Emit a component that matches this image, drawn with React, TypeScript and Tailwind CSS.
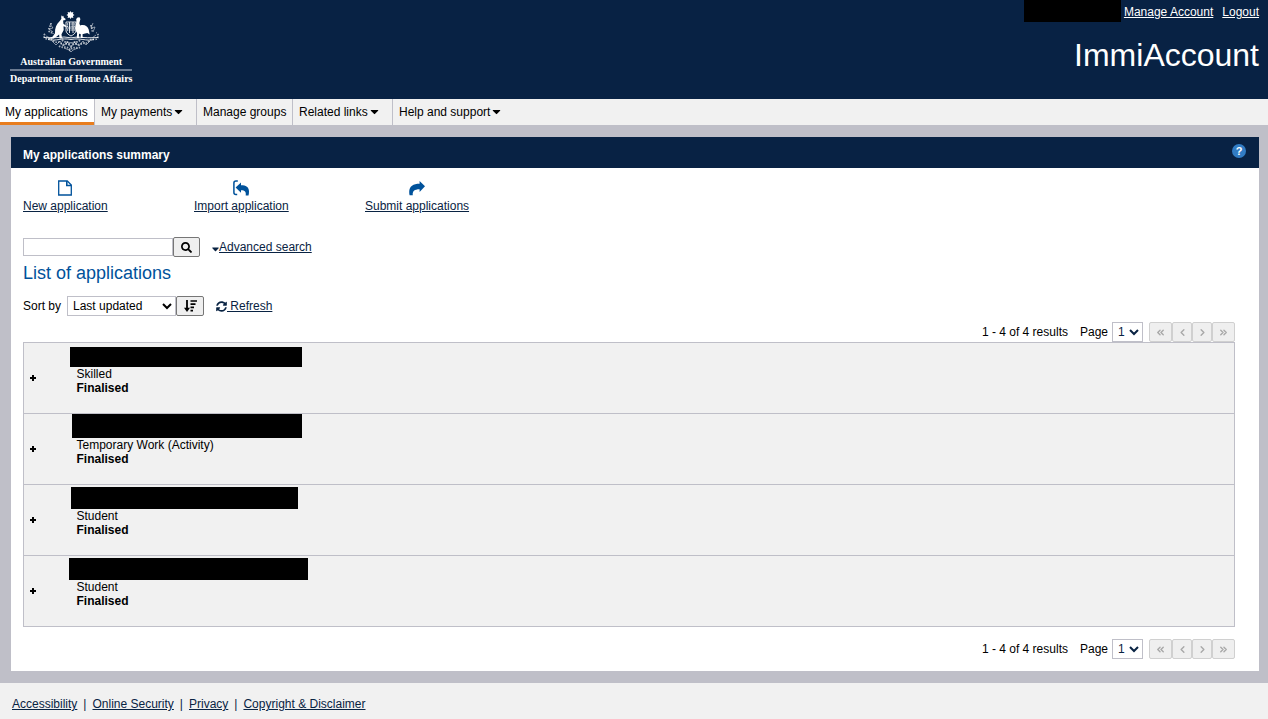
import React from "react";
import { FaCaretDown, FaSearch, FaSyncAlt } from "react-icons/fa";
import { ChevronLeft, ChevronRight, ChevronsLeft, ChevronsRight } from "lucide-react";

const applications = [
  { type: "Skilled", status: "Finalised", mask: "left-[-7px] top-[-6px] h-5 w-[232px]" },
  { type: "Temporary Work (Activity)", status: "Finalised", mask: "left-[-5px] top-[-10px] h-6 w-[230px]" },
  { type: "Student", status: "Finalised", mask: "left-[-6px] top-[-8px] h-[22px] w-[227px]" },
  { type: "Student", status: "Finalised", mask: "left-[-8px] top-[-8px] h-[22px] w-[239px]" },
];

const tabs = [
  { label: "My payments", menu: true, width: "w-[102px]" },
  { label: "Manage groups", menu: false, width: "w-[96px]" },
  { label: "Related links", menu: true, width: "w-[100px]" },
  { label: "Help and support", menu: true, width: "w-[120px]" },
];

function Crest() {
  return (
    <svg className="h-[42px] w-[58px]" viewBox="0 0 58 42" fill="none" stroke="#fff" aria-hidden="true">
      <path fill="#fff" stroke="none" d="M28.500 0l.9 1.500 2-.4-.5 2 1.600 1-1.600.9.5 1.900-2-.4-.9 1.500-.9-1.500-2 .4.5-1.900-1.600-.9 1.600-1-.5-2 2 .4z" />
      <path fill="#fff" stroke="none" d="M19.200 5.800l.6-1.600.8 1.300 1-.7-.1 1.500 2.200 1.700-.5 1.100-2.100.3.300 3.400 3 2.200.3 1.200-3.200-.9.200 3.800-2.200 4.100.4 3.400 1.800.8-4.200.2-.4-4-3 2.400-2.400 1.400-6.200.4 5-2 2.500-3.600c-.2-5 1.400-9.200 4.800-12.200l1.600-2.300z" />
      <path fill="#fff" stroke="none" d="M34 8.200l1.500-1.800 2-.2.900 1.700-1.100 4.300.8 2.200c4.400-1.200 7.200.4 8.600 4l1 5-2.400-1.500-3.200.9-1.600.4.2 3 1.900.9-3.800-.1-.1-4-1.600-.3-.3 3.300 1.200 1.100-3.200-.2.300-4.800-1.500-2.600c-.9-3.400.3-5.600.6-7.800l.2-3z" />
      <path strokeWidth="1" opacity=".85" d="M24 11h10v9c-1 3-3 4-5 5-2-1-4-2-5-5zM24 17h10M27.500 11v11M31 11v11" />
      <path strokeWidth="1.400" opacity=".85" strokeDasharray="1.200 1" d="M25 13h8M25 15.300h8M25 19h8" />
      <path strokeWidth="1" opacity=".85" d="M2 26.500c8 .5 13 .2 20-.5l7 .8 7-.8c7 .7 12 1 20 .5M6 28.500c8 2 14-2 23 0 9-2 15 2 23 0" />
      <path strokeWidth="1.800" strokeDasharray="1.400 1.300" opacity=".65" d="M3 23c-3 3 1 6 4 5s5 4 8 3 5 4 8 2 6 4 8 1 6 1 8-1 5 1 8-3 7 1 9-4c1-2-1-4-2-4M9 12c0 3-3 5-2 8s4 0 4 3M49 14c0 3 2 4 1 8M17 35c4 3 8-1 11 4 4-4 7-1 11-3M20 29c4 4 6 0 9 4 3-4 6 0 9-4" />
      <path strokeWidth="1" opacity=".5" d="M8 13l3 4-4 1 4 3M51 12l-2 5 4-1-2 5M10 30l4 4 4-4 3 5 5-4 3 6 3-6 5 4 4-5 3 4 4-4M22 37l5 2 2 2 2-2 5-2M4 25l4 2M50 27l4-3M24 30v4M34 30v4" />
    </svg>
  );
}

function NewIcon() {
  return (
    <svg className="h-4 w-4" viewBox="0 0 16 16" fill="none" stroke="#00529b" strokeWidth="1.300" aria-hidden="true">
      <path d="M1.700 1h8.600l4 4v10H1.700z" />
      <path d="M9.800 1v4.500h4.500" strokeWidth="1.600" />
    </svg>
  );
}

function ImportIcon() {
  return (
    <svg className="h-4 w-4" viewBox="0 0 16 16" aria-hidden="true">
      <path d="M4.800 1H3Q.9 1 .9 3v9.500q0 2 2 2h1.300" fill="none" stroke="#00529b" strokeWidth="1.500" />
      <path d="M2.600 7.500L8 2.400v2.900c5 0 8 1.900 8 6.200 0 1.400-.1 2.700-.5 3.900H12.700c.5-3.600-.7-5.100-4.700-5.100v2.500z" fill="#00529b" />
    </svg>
  );
}

function SubmitIcon() {
  return (
    <svg className="h-4 w-4" viewBox="0 0 16 16" aria-hidden="true">
      <path d="M16 6.300L10.600 1v2.800C4.300 3.800.2 6.300.2 12c0 1.200.1 2.200.4 3.200h3.200c-.5-4 1.500-6 6.800-6v2.700z" fill="#00529b" />
    </svg>
  );
}

function SortIcon() {
  return (
    <svg className="h-3 w-[13px]" viewBox="0 0 13 12" fill="none" stroke="#000" strokeWidth="1.800" aria-hidden="true">
      <path d="M3 0v10" />
      <path d="M0 7.800h6L3 12z" fill="#000" stroke="none" />
      <path d="M6.500 1H13M6.500 4.200h5M6.500 7.400H10M6.500 10.600H9" strokeWidth="1.700" />
    </svg>
  );
}

function Actions() {
  const items = [
    { label: "New application", icon: <NewIcon /> },
    { label: "Import application", icon: <ImportIcon /> },
    { label: "Submit applications", icon: <SubmitIcon /> },
  ];
  return (
    <div className="flex pt-3">
      {items.map((item) => (
        <div key={item.label} className="w-[171px]">
          <a href="#" className="inline-flex flex-col items-center gap-[3px] underline">
            {item.icon}
            <span>{item.label}</span>
          </a>
        </div>
      ))}
    </div>
  );
}

function Pager({ id }: { id: string }) {
  const button = "flex h-5 items-center justify-center rounded-[2px] border border-[#d0d0d0] bg-[#efefef] text-[#a8a8a8]";
  return (
    <div className="flex h-5 items-center justify-end">
      <span className="mr-3">1 - 4 of 4 results</span>
      <label htmlFor={id} className="mr-1">Page</label>
      <select id={id} className="mr-[6px] h-5 w-[31px] border border-[#bfbfc8] bg-white pl-px text-[#092343]">
        <option>1</option>
      </select>
      <button disabled aria-label="First page" className={button + " w-[23px]"}><ChevronsLeft className="h-[11px] w-[11px]" strokeWidth={3} /></button>
      <button disabled aria-label="Previous page" className={button + " w-5"}><ChevronLeft className="h-[11px] w-[11px]" strokeWidth={3} /></button>
      <button disabled aria-label="Next page" className={button + " w-5"}><ChevronRight className="h-[11px] w-[11px]" strokeWidth={3} /></button>
      <button disabled aria-label="Last page" className={button + " w-[23px]"}><ChevronsRight className="h-[11px] w-[11px]" strokeWidth={3} /></button>
    </div>
  );
}

export default function App() {
  return (
    <div className="min-h-screen bg-[#f1f1f1] font-['Liberation_Sans',Arial,sans-serif] text-[12px] leading-[14px] text-black">
      <header className="flex h-[99px] justify-between bg-[#082244] text-white">
        <div className="flex flex-col items-center pt-[11px] pl-[10px] font-['Liberation_Serif',serif] text-[10px] leading-[14px] font-bold whitespace-nowrap">
          <Crest />
          <span className="mt-[2px]">Australian Government</span>
          <span className="h-[2px] w-full bg-[#6b7b92]" />
          <span className="mt-px">Department of Home Affairs</span>
        </div>
        <div className="flex flex-col items-end pr-[9px]">
          <div className="flex h-6 items-center">
            <span className="mr-[3px] h-[22px] w-[97px] self-start bg-black" />
            <a href="#" className="mr-[9px] underline">Manage Account</a>
            <a href="#" className="underline">Logout</a>
          </div>
          <h1 className="mt-3 text-[32px] leading-[38px]">ImmiAccount</h1>
        </div>
      </header>

      <nav className="flex h-[26px]">
        <a href="#" className="w-[94px] border-b-[3px] border-[#e87d1e] bg-white pt-[6px] pl-[5px] whitespace-nowrap">My applications</a>
        {tabs.map((tab) => (
          <a key={tab.label} href="#" className={"flex items-start border-l border-[#bfbfc8] pt-[6px] pl-[6px] whitespace-nowrap " + tab.width}>
            {tab.label}
            {tab.menu && <FaCaretDown className="ml-[2px] h-[13px] w-[9px]" />}
          </a>
        ))}
      </nav>

      <main className="bg-[#bfbfc8] pt-3 pr-[9px] pb-3 pl-[11px]">
        <section className="bg-white">
          <div className="flex h-[31px] justify-between bg-[#082244] pr-[13px] pl-3 text-white">
            <h2 className="pt-[11px] font-bold">My applications summary</h2>
            <a href="#" aria-label="Help" className="mt-[7px] flex h-[14px] w-[14px] items-center justify-center rounded-full bg-[#317cc4] text-[11px] font-bold">?</a>
          </div>
          <div className="pr-6 pb-3 pl-3">
            <div className="text-[#092343]">
              <Actions />
            </div>
            <form className="mt-6 flex h-5 items-center" onSubmit={(e) => e.preventDefault()}>
              <input type="text" aria-label="Search applications" className="h-[18px] w-[150px] border border-[#bfbfc8] bg-white px-1" />
              <button aria-label="Search" className="flex h-5 w-[27px] items-center justify-center rounded-[2px] border border-[#767676] bg-[#efefef]">
                <FaSearch className="h-[11px] w-[11px]" />
              </button>
              <a href="#" className="ml-3 flex items-center text-[#092343]">
                <FaCaretDown className="mt-[3px] h-3 w-[7px]" />
                <span className="underline">Advanced search</span>
              </a>
            </form>
            <h3 className="mt-[5px] text-[18px] leading-[22px] text-[#00529b]">List of applications</h3>
            <div className="mt-3 flex h-5 items-center">
              <label htmlFor="sort" className="mr-[6px]">Sort by</label>
              <select id="sort" className="h-5 w-[109px] border border-[#bfbfc8] bg-white pl-px">
                <option>Last updated</option>
              </select>
              <button aria-label="Sort descending" className="flex h-5 w-7 items-center justify-center rounded-[2px] border border-[#767676] bg-[#efefef]">
                <SortIcon />
              </button>
              <a href="#" className="ml-3 flex items-center whitespace-pre text-[#092343]">
                <FaSyncAlt className="h-[11px] w-[11px]" />
                <span className="underline"> Refresh</span>
              </a>
            </div>
            <div className="mt-[6px]">
              <Pager id="page-top" />
            </div>
            <table className="w-full border-collapse border border-[#bfbfc8] bg-[#f1f1f1]">
              <tbody>
                {applications.map((app, i) => (
                  <tr key={i} className="h-[71px] border border-[#bfbfc8]">
                    <td className="w-[53px] pl-[5px] align-middle">
                      <button aria-label="Expand" className="flex h-[14px] w-2 items-center justify-center">
                        <svg className="h-[6px] w-[6px]" viewBox="0 0 6 6" stroke="#000" strokeWidth="2" aria-hidden="true">
                          <path d="M3 0v6M0 3h6" />
                        </svg>
                      </button>
                    </td>
                    <td className="align-top">
                      <div className="relative pt-6">
                        <span className={"absolute mt-[10px] bg-black " + app.mask} />
                        <div>{app.type}</div>
                        <div className="font-bold">{app.status}</div>
                      </div>
                    </td>
                  </tr>
                ))}
              </tbody>
            </table>
            <div className="mt-3">
              <Pager id="page-bottom" />
            </div>
          </div>
        </section>
      </main>

      <footer className="flex pt-[14px] pl-3 text-[#092343]">
        <a href="#" className="underline">Accessibility</a>
        <span className="mx-[6px]">|</span>
        <a href="#" className="underline">Online Security</a>
        <span className="mx-[6px]">|</span>
        <a href="#" className="underline">Privacy</a>
        <span className="mx-[6px]">|</span>
        <a href="#" className="underline">Copyright &amp; Disclaimer</a>
      </footer>
    </div>
  );
}
